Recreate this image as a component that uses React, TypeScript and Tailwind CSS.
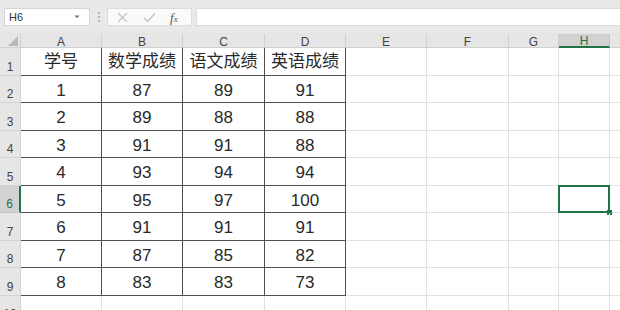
import React from "react";

const colW = [81, 81, 82, 81, 81, 82, 50, 51];
const colL = ["A", "B", "C", "D", "E", "F", "G", "H"];
const rowH = [28, 27, 28, 27, 28, 27, 28, 27, 28, 27];

const data: string[][] = [
  ["学号", "数学成绩", "语文成绩", "英语成绩"],
  ["1", "87", "89", "91"],
  ["2", "89", "88", "88"],
  ["3", "91", "91", "88"],
  ["4", "93", "94", "94"],
  ["5", "95", "97", "100"],
  ["6", "91", "91", "91"],
  ["7", "87", "85", "82"],
  ["8", "83", "83", "73"],
];

const font = { fontFamily: '"Liberation Sans", "Noto Sans CJK SC", sans-serif' };

export default function App() {
  const cols = `21px ${colW.map((w) => w + "px").join(" ")} 1fr`;
  const rows = `14px ${rowH.map((h) => h + "px").join(" ")}`;
  const selRow = 6;
  const selCol = 7;
  return (
    <div className="w-[620px] h-[310px] overflow-hidden bg-white flex flex-col" style={font}>
      {/* formula bar */}
      <div className="h-[34px] shrink-0 bg-[#e9e9e9] flex items-start pt-[8px] pl-[4px] border-b border-[#e2e2e2]">
        <div className="w-[86px] h-[18px] bg-white border border-[#d6d6d6] flex items-center justify-between pl-[4px] pr-[9px]">
          <span className="text-[11px] text-[#333] leading-none">H6</span>
          <svg width="6" height="4" viewBox="0 0 6 4">
            <path d="M0.5 0.5 L3 3.2 L5.5 0.5 Z" fill="#777" />
          </svg>
        </div>
        <div className="w-[17px] h-[18px] flex flex-col items-center justify-center gap-[2px]">
          <div className="w-[2px] h-[2px] bg-[#b5b5b5]" />
          <div className="w-[2px] h-[2px] bg-[#b5b5b5]" />
          <div className="w-[2px] h-[2px] bg-[#b5b5b5]" />
        </div>
        <div className="w-[85px] h-[18px] bg-[#fafafa] border border-[#dcdcdc] flex items-center">
          <svg width="11" height="11" viewBox="0 0 11 11" className="ml-[9px]">
            <path d="M1 1 L10 10 M10 1 L1 10" stroke="#c2c2c2" strokeWidth="1.2" />
          </svg>
          <svg width="13" height="11" viewBox="0 0 13 11" className="ml-[15px]">
            <path d="M1 6 L4.5 9.5 L12 1.5" stroke="#c2c2c2" strokeWidth="1.3" fill="none" />
          </svg>
          <span
            className="ml-[14px] text-[13px] italic text-[#555] leading-none"
            style={{ fontFamily: '"Liberation Serif", serif' }}
          >
            f<span className="text-[9px]">x</span>
          </span>
        </div>
        <div className="ml-[4px] flex-1 h-[18px] bg-white border-y border-l border-[#dcdcdc]" />
      </div>

      {/* grid */}
      <div className="grid shrink-0" style={{ gridTemplateColumns: cols, gridTemplateRows: rows }}>
        {/* corner */}
        <div className="bg-[#e6e6e6] border-r border-b border-[#cfcfcf] flex items-end justify-end pr-[2px] pb-[1px]">
          <svg width="10" height="10" viewBox="0 0 10 10">
            <path d="M10 0 L10 10 L0 10 Z" fill="#b8b8b8" />
          </svg>
        </div>
        {colL.map((c, i) => (
          <div
            key={c}
            className={
              i === selCol
                ? "bg-[#d2d2d2] border-r border-[#c6c6c6] border-b-2 border-b-[#217346] flex items-center justify-center pt-[2px] text-[12px] text-[#217346] leading-none"
                : "bg-[#e6e6e6] border-r border-b border-[#cfcfcf] flex items-center justify-center pt-[2px] text-[12px] text-[#444] leading-none"
            }
          >
            {c}
          </div>
        ))}
        <div className="bg-[#e6e6e6] border-b border-[#cfcfcf]" />

        {rowH.map((_, r) => {
          const rn = r + 1;
          const isSel = rn === selRow;
          return (
            <React.Fragment key={rn}>
              <div
                className={
                  isSel
                    ? "bg-[#d2d2d2] border-b border-[#c6c6c6] border-r-2 border-r-[#217346] flex items-end justify-center pb-[2px] text-[12px] text-[#217346] leading-none"
                    : "bg-[#e6e6e6] border-b border-r border-[#d4d4d4] flex items-end justify-center pb-[2px] text-[12px] text-[#444] leading-none"
                }
              >
                {rn}
              </div>
              {colL.map((c, ci) => {
                const inTable = rn <= 9 && ci < 4;
                const val = inTable ? data[r][ci] : "";
                const isHead = rn === 1;
                return (
                  <div
                    key={c}
                    className={
                      inTable
                        ? "relative border-r border-b border-[#505050] flex items-center justify-center text-[#2a2a2a] leading-none " +
                          (isHead ? "text-[17px]" : "text-[17px] pt-[2px]")
                        : "relative border-r border-b border-[#e1e1e1]"
                    }
                  >
                    {val}
                    {isSel && ci === selCol && (
                      <div className="absolute -left-[1px] -top-[1px] -right-[1px] -bottom-[1px] border-2 border-[#217346]">
                        <div className="absolute -right-[4px] -bottom-[4px] w-[5px] h-[5px] bg-[#217346]" />
                      </div>
                    )}
                  </div>
                );
              })}
              <div className="border-b border-[#e1e1e1]" />
            </React.Fragment>
          );
        })}
      </div>
    </div>
  );
}
